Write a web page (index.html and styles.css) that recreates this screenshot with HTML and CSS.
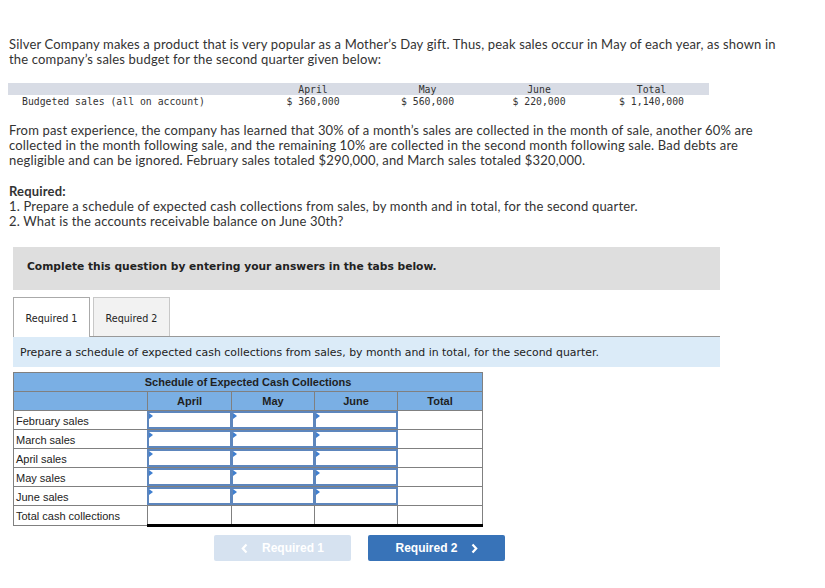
FILE: index.html
```html
<!DOCTYPE html>
<html>
<head>
<meta charset="utf-8">
<link rel="stylesheet" href="styles.css">
</head>
<body>
<div class="page">
  <p class="intro">Silver Company makes a product that is very popular as a Mother’s Day gift. Thus, peak sales occur in May of each year, as shown in the company’s sales budget for the second quarter given below:</p>

  <div class="budget">
    <div class="brow bhead">
      <span class="blabel"></span>
      <span class="bcol c1">April</span>
      <span class="bcol c2">May</span>
      <span class="bcol c3">June</span>
      <span class="bcol c4">Total</span>
    </div>
    <div class="brow">
      <span class="blabel">Budgeted sales (all on account)</span>
      <span class="bcol c1">$ 360,000</span>
      <span class="bcol c2">$ 560,000</span>
      <span class="bcol c3">$ 220,000</span>
      <span class="bcol c4">$ 1,140,000</span>
    </div>
  </div>

  <p class="para">From past experience, the company has learned that 30% of a month’s sales are collected in the month of sale, another 60% are collected in the month following sale, and the remaining 10% are collected in the second month following sale. Bad debts are negligible and can be ignored. February sales totaled $290,000, and March sales totaled $320,000.</p>

  <div class="req">
    <div class="req-title">Required:</div>
    <div>1. Prepare a schedule of expected cash collections from sales, by month and in total, for the second quarter.</div>
    <div>2. What is the accounts receivable balance on June 30th?</div>
  </div>

  <div class="question">
    <div class="notice">Complete this question by entering your answers in the tabs below.</div>

    <div class="tabs">
      <div class="tab active">Required 1</div>
      <div class="tab">Required 2</div>
    </div>
    <div class="instr">Prepare a schedule of expected cash collections from sales, by month and in total, for the second quarter.</div>

    <table class="sched">
      <colgroup>
        <col class="w-label"><col class="w-m1"><col class="w-m2"><col class="w-m3"><col class="w-tot">
      </colgroup>
      <tr class="title-row"><th colspan="5">Schedule of Expected Cash Collections</th></tr>
      <tr class="head-row"><th></th><th>April</th><th>May</th><th>June</th><th>Total</th></tr>
      <tr><td class="lbl">February sales</td><td class="in"><div class="inp"></div></td><td class="in"><div class="inp"></div></td><td class="in"><div class="inp"></div></td><td></td></tr>
      <tr><td class="lbl">March sales</td><td class="in"><div class="inp"></div></td><td class="in"><div class="inp"></div></td><td class="in"><div class="inp"></div></td><td></td></tr>
      <tr><td class="lbl">April sales</td><td class="in"><div class="inp"></div></td><td class="in"><div class="inp"></div></td><td class="in"><div class="inp"></div></td><td></td></tr>
      <tr><td class="lbl">May sales</td><td class="in"><div class="inp"></div></td><td class="in"><div class="inp"></div></td><td class="in"><div class="inp"></div></td><td></td></tr>
      <tr><td class="lbl">June sales</td><td class="in"><div class="inp"></div></td><td class="in"><div class="inp"></div></td><td class="in"><div class="inp"></div></td><td></td></tr>
      <tr class="total-row"><td class="lbl">Total cash collections</td><td></td><td></td><td></td><td></td></tr>
    </table>

    <div class="nav">
      <div class="btn disabled"><svg class="chev left" width="7" height="11" viewBox="0 0 7 11"><polyline points="5.5,1.5 1.8,5.5 5.5,9.5" fill="none" stroke="#ffffff" stroke-width="2.2"/></svg>Required 1</div>
      <div class="btn primary">Required 2<svg class="chev right" width="7" height="11" viewBox="0 0 7 11"><polyline points="1.5,1.5 5.2,5.5 1.5,9.5" fill="none" stroke="#ffffff" stroke-width="2.2"/></svg></div>
    </div>
  </div>
</div>
</body>
</html>
```

FILE: styles.css
```css
html, body {
  margin: 0;
  padding: 0;
  background: #ffffff;
}

.page {
  padding: 37px 0 0 9px;
  width: 800px;
  font-family: Lato, "Open Sans", sans-serif;
  font-size: 13px;
  color: #333333;
}

.intro, .para {
  margin: 0;
  line-height: 15px;
  width: 782px;
  letter-spacing: 0.17px;
}

.req {
  letter-spacing: 0.17px;
}

.budget {
  margin: 16px 0 0 -1px;
  width: 701px;
  font-family: "DejaVu Sans Mono", "Liberation Mono", monospace;
  font-size: 9.8px;
  color: #333333;
}

.brow {
  display: flex;
  height: 13px;
  line-height: 13px;
}

.bhead {
  background: #d8dce5;
  height: 12px;
  line-height: 13px;
}

.blabel {
  width: 233px;
  padding-left: 14px;
}

.bcol {
  text-align: center;
}

.c1 { width: 116px; }
.c2 { width: 113px; }
.c3 { width: 110px; }
.c4 { width: 115px; }

.para {
  margin-top: 15px;
}

.req {
  margin-top: 16px;
  line-height: 15px;
}

.req-title {
  font-weight: bold;
}

.question {
  margin: 18px 0 0 4px;
  width: 707px;
  font-family: "DejaVu Sans", Verdana, sans-serif;
}

.notice {
  height: 43px;
  background: #dedede;
  padding: 0 0 5px 14px;
  font-size: 10.7px;
  font-weight: bold;
  color: #222222;
  box-sizing: border-box;
  display: flex;
  align-items: center;
}

.tabs {
  display: flex;
  gap: 3px;
  margin-top: 7px;
  border-bottom: 1px solid #999999;
}

.tab {
  width: 77px;
  height: 39px;
  box-sizing: border-box;
  border: 1px solid #c8c8c8;
  border-bottom: none;
  background: #f2f2f2;
  font-size: 9.6px;
  color: #222222;
  display: flex;
  align-items: center;
  justify-content: center;
  padding-top: 2px;
}

.tab.active {
  background: #ffffff;
  border-color: #aaaaaa;
  height: 40px;
  margin-bottom: -1px;
}

.instr {
  height: 30px;
  background: #dbebf8;
  padding-left: 7px;
  display: flex;
  align-items: center;
  font-size: 10.9px;
  color: #222222;
}

.sched {
  margin-top: 5px;
  border-collapse: collapse;
  table-layout: fixed;
  width: 469px;
  font-family: "Liberation Sans", Arial, sans-serif;
  font-size: 11px;
  color: #222222;
}

.w-label { width: 134px; }
.w-m1 { width: 84px; }
.w-m2 { width: 83px; }
.w-m3 { width: 83px; }
.w-tot { width: 85px; }

.sched th, .sched td {
  border: 1px solid #808080;
  padding: 0;
  height: 18px;
}

.sched th {
  background: #7aafe4;
  font-weight: bold;
  text-align: center;
  color: #1f1f1f;
}

.title-row th {
  height: 18px;
}

.head-row th {
  height: 18px;
}

.sched td.lbl {
  padding: 1px 0 0 2px;
  height: 17px;
  text-align: left;
}

.sched td.in {
  padding: 0;
}

.inp {
  position: relative;
  height: 18px;
  box-sizing: border-box;
  border: 2px solid #5d86bd;
  margin: -1px;
  background: #ffffff;
}

.inp::before {
  content: "";
  position: absolute;
  left: 0;
  top: 0;
  border-top: 3px solid transparent;
  border-bottom: 3px solid transparent;
  border-left: 4px solid #3f7fd0;
}

.total-row td {
  border-top: 1px solid #222222;
  border-bottom: 3px solid #000000;
}

.total-row td.lbl {
  border-top: 1px solid #808080;
  border-bottom: 1px solid #808080;
}

.nav {
  display: flex;
  gap: 17px;
  margin: 8px 0 0 201px;
}

.btn {
  width: 137px;
  height: 26px;
  border-radius: 2px;
  display: flex;
  align-items: center;
  justify-content: center;
  font-family: "Liberation Sans", Arial, sans-serif;
  font-size: 12px;
  font-weight: bold;
  color: #ffffff;
}

.btn.disabled {
  background: #d6e2f0;
}

.btn.primary {
  background: #3873b8;
}

.chev.left {
  margin-right: 14px;
}

.chev.right {
  margin-left: 13px;
}
```
